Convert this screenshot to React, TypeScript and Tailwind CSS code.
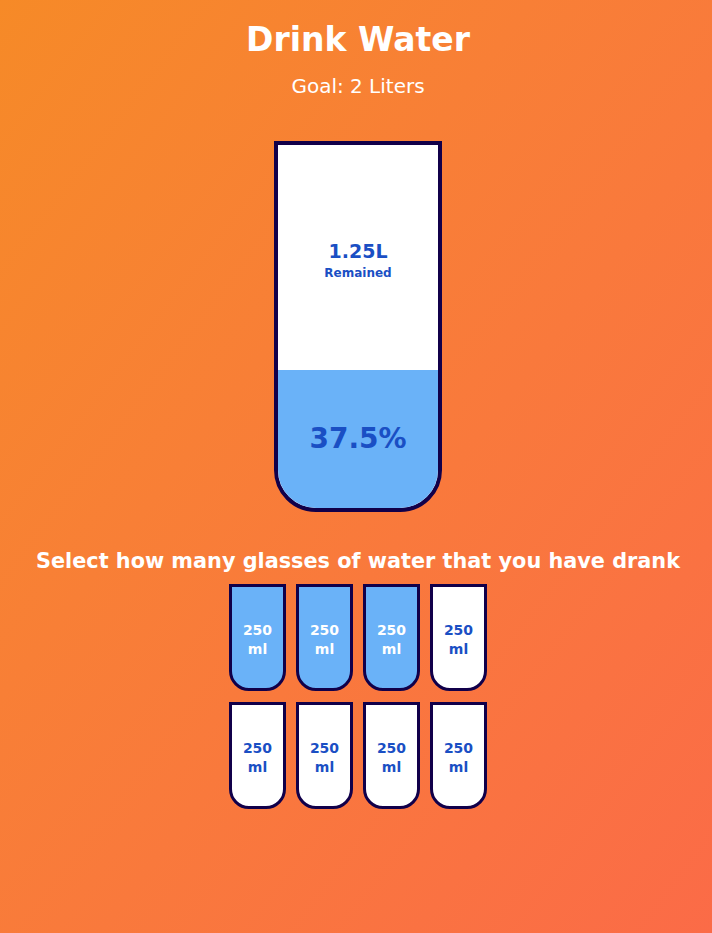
export default function App() {
  const cups = [true, true, true, false, false, false, false, false];

  return (
    <div
      className="flex min-h-[933px] w-full flex-col items-center bg-gradient-to-br from-[#f68a27] to-[#fb6b47] pl-[4px] text-white"
      style={{ fontFamily: '"DejaVu Sans", sans-serif' }}
    >
      <h1 className="mt-[18px] text-[33px] font-bold leading-[44px]">Drink Water</h1>
      <p className="mt-[12px] text-[20px] leading-[24px]">Goal: 2 Liters</p>

      {/* Big cup */}
      <div className="mt-[43px] flex h-[371px] w-[168px] flex-col overflow-hidden rounded-b-[42px] border-4 border-[#11004a] bg-white">
        <div className="flex flex-1 flex-col items-center justify-center pt-[4px] text-[#1a4fc4]">
          <span className="text-[19px] font-bold leading-6">1.25L</span>
          <small className="mt-[2px] text-[12px] font-bold leading-4">Remained</small>
        </div>
        <div className="flex h-[138px] items-center justify-center bg-[#6ab2f8] text-[#1a4fc4]">
          <span className="text-[28px] font-bold">37.5%</span>
        </div>
      </div>

      <p className="mt-[35px] text-[20.8px] font-bold leading-[28px]">
        Select how many glasses of water that you have drank
      </p>

      <div className="mt-[9px] grid grid-cols-4 gap-x-[10px] gap-y-[11px]">
        {cups.map((full, i) => (
          <div
            key={i}
            className={`flex h-[107px] w-[57px] flex-col items-center justify-center rounded-b-[20px] border-[3.5px] border-[#11004a] pt-[4px] text-[14px] font-bold leading-[19px] ${
              full ? "bg-[#6ab2f8] text-white" : "bg-white text-[#1a4fc4]"
            }`}
          >
            <span>250</span>
            <span>ml</span>
          </div>
        ))}
      </div>
    </div>
  );
}
